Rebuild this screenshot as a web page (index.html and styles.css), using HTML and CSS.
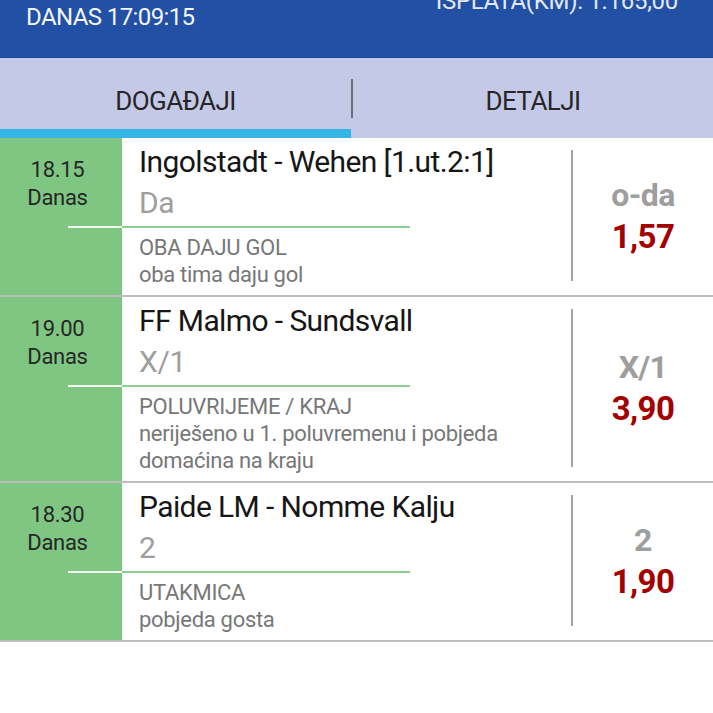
FILE: index.html
```html
<!DOCTYPE html>
<html lang="hr">
<head>
    <meta charset="UTF-8">
    <meta name="viewport" content="width=device-width, initial-scale=1.0">
    <title>Listić</title>
    <link rel="stylesheet" href="styles.css">
</head>
<body>
    <div class="topbar">
        <span class="clock">DANAS 17:09:15</span>
        <span class="payout">ISPLATA(KM): 1.165,00</span>
    </div>

    <div class="tabs">
        <div class="tab tab-active">DOGAĐAJI</div>
        <div class="tab-sep"></div>
        <div class="tab">DETALJI</div>
    </div>

    <div class="match">
        <div class="when">
            <div class="when-time">18.15</div>
            <div class="when-day">Danas</div>
            <div class="when-rule"></div>
        </div>
        <div class="info">
            <div class="teams">Ingolstadt - Wehen [1.ut.2:1]</div>
            <div class="pick">Da</div>
            <div class="rule"></div>
            <div class="market">
                <div>OBA DAJU GOL</div>
                <div>oba tima daju gol</div>
            </div>
        </div>
        <div class="odds">
            <div class="odds-tip">o-da</div>
            <div class="odds-val">1,57</div>
        </div>
    </div>

    <div class="match">
        <div class="when">
            <div class="when-time">19.00</div>
            <div class="when-day">Danas</div>
            <div class="when-rule"></div>
        </div>
        <div class="info">
            <div class="teams">FF Malmo - Sundsvall</div>
            <div class="pick">X/1</div>
            <div class="rule"></div>
            <div class="market">
                <div>POLUVRIJEME / KRAJ</div>
                <div>neriješeno u 1. poluvremenu i pobjeda domaćina na kraju</div>
            </div>
        </div>
        <div class="odds">
            <div class="odds-tip">X/1</div>
            <div class="odds-val">3,90</div>
        </div>
    </div>

    <div class="match">
        <div class="when">
            <div class="when-time">18.30</div>
            <div class="when-day">Danas</div>
            <div class="when-rule"></div>
        </div>
        <div class="info">
            <div class="teams">Paide LM - Nomme Kalju</div>
            <div class="pick">2</div>
            <div class="rule"></div>
            <div class="market">
                <div>UTAKMICA</div>
                <div>pobjeda gosta</div>
            </div>
        </div>
        <div class="odds">
            <div class="odds-tip">2</div>
            <div class="odds-val">1,90</div>
        </div>
    </div>
</body>
</html>
```

FILE: styles.css
```css
body {
    margin: 0;
    background-color: white;
    font-family: Roboto, "Liberation Sans", sans-serif;
    overflow: hidden;
}

/* top blue bar */
.topbar {
    box-sizing: border-box;
    height: 58px;
    background-color: #2150a4;
    border-bottom: 1px solid #1c4596;
    display: flex;
    justify-content: space-between;
    align-items: flex-start;
    padding: 3px 35px 0 26px;
}
.clock {
    color: #f4f6fb;
    font-size: 24px;
    line-height: 28px;
    letter-spacing: -0.6px;
}
.payout {
    color: #e3e8f4;
    font-size: 24px;
    line-height: 28px;
    letter-spacing: -0.3px;
    margin-top: -16px;
}

/* tabs */
.tabs {
    height: 80px;
    background-color: #c5c9e8;
    display: flex;
}
.tab {
    flex: 1;
    box-sizing: border-box;
    padding-top: 28px;
    text-align: center;
    font-size: 26px;
    line-height: 30px;
    letter-spacing: -0.6px;
    color: #262626;
}
.tab-active {
    flex: none;
    width: 351px;
    border-bottom: 9px solid #34b5e5;
}
.tab-sep {
    width: 2px;
    height: 39px;
    align-self: center;
    background-color: #6e6e78;
}

/* bet rows */
.match {
    display: flex;
    border-bottom: 2px solid #bdbdbd;
}
.when {
    width: 122px;
    flex: none;
    background-color: #80c683;
    padding-top: 18px;
    color: #262626;
    font-size: 22px;
    line-height: 28px;
    letter-spacing: -0.3px;
}
.when-time,
.when-day {
    text-align: center;
    padding-right: 7px;
}
.when-rule {
    margin: 14px 0 0 68px;
    height: 2px;
    background-color: #f2faf2;
}
.info {
    flex: 1;
    min-width: 0;
}
.teams {
    padding: 6px 0 0 17px;
    font-size: 30px;
    line-height: 36px;
    letter-spacing: -0.6px;
    color: #161616;
    white-space: nowrap;
}
.pick {
    padding-left: 17px;
    font-size: 30px;
    line-height: 46px;
    letter-spacing: -0.4px;
    color: #9e9e9e;
}
.rule {
    width: 288px;
    height: 2px;
    background-color: #8fce92;
}
.market {
    padding: 6px 20px 7px 17px;
    font-size: 22px;
    line-height: 27px;
    letter-spacing: -0.3px;
    color: #777777;
}
.odds {
    width: 140px;
    flex: none;
    margin: 12px 0 14px;
    border-left: 2px solid #a4a4a4;
    display: flex;
    flex-direction: column;
    justify-content: center;
    text-align: center;
    font-weight: bold;
    line-height: 42px;
}
.odds-tip {
    font-size: 32px;
    color: #9e9e9e;
    letter-spacing: -0.6px;
}
.odds-val {
    font-size: 33px;
    color: #a30000;
    letter-spacing: -0.6px;
}
```
